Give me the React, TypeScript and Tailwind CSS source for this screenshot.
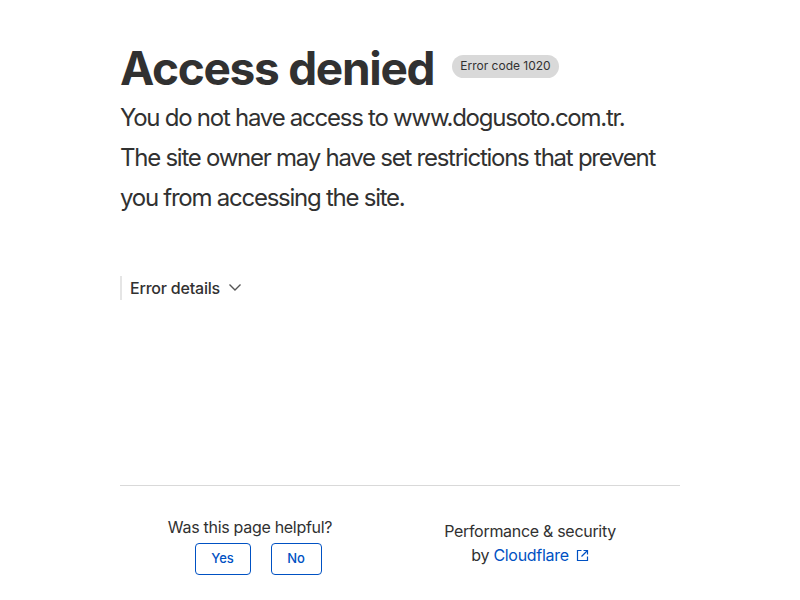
import React from "react";

export default function App() {
  return (
    <div
      className="w-[800px] h-[600px] bg-white text-[#313131] overflow-hidden"
      style={{ fontFamily: 'Inter, "Noto Sans", sans-serif' }}
    >
      <div className="w-[560px] mx-auto pt-[38px]">
        <div className="flex items-center gap-[18px]">
          <h1 className="text-[46px] font-bold leading-[60px] tracking-[-1.3px]">Access denied</h1>
          <span className="mt-[-4px] rounded-full bg-[#d9d9d9] px-[8px] h-[23px] flex items-center text-[12px] leading-none">
            Error code 1020
          </span>
        </div>
        <div className="text-[24px] leading-[40px] tracking-[-1.25px]">
          <p>You do not have access to www.dogusoto.com.tr.</p>
          <p>The site owner may have set restrictions that prevent you from accessing the site.</p>
        </div>
        <div className="mt-[58px] border-l-2 border-[#e5e5e5] pl-[8px] h-[24px] flex items-center gap-[8px]">
          <span className="text-[16px] font-medium tracking-[-0.2px]">Error details</span>
          <svg width="14" height="14" viewBox="0 0 14 14" fill="none" stroke="#555" strokeWidth="1.4" className="mt-[-2px]">
            <path d="M1.5 4.5 L7 10 L12.5 4.5" />
          </svg>
        </div>
        <div className="mt-[185px] border-t border-[#d9d9d9]" />
        <div className="flex gap-[20px]">
          <div className="w-[260px] flex flex-col items-center pt-[29px]">
            <div className="text-[16px] leading-[24px] tracking-[-0.3px]">Was this page helpful?</div>
            <div className="flex gap-[20px] mt-[4px] ml-[16px]">
              <button className="w-[56px] h-[32px] border border-[#0051c3] rounded-[4px] text-[13px] text-[#0051c3] font-medium">
                Yes
              </button>
              <button className="w-[51px] h-[32px] border border-[#0051c3] rounded-[4px] text-[13px] text-[#0051c3] font-medium">
                No
              </button>
            </div>
          </div>
          <div className="w-[260px] flex flex-col items-center pt-[33px] text-[16px] leading-[24px] tracking-[-0.3px]">
            <div>Performance &amp; security</div>
            <div className="flex items-center">
              by&nbsp;<span className="text-[#0051c3]">Cloudflare</span>
              <svg width="13" height="13" viewBox="0 0 13 13" fill="none" stroke="#0051c3" strokeWidth="1.2" className="ml-[7px]">
                <path d="M5.5 1.5 H1.5 V11.5 H11.5 V7.5" />
                <path d="M7.5 1.5 H11.5 V5.5" />
                <path d="M11.5 1.5 L5.5 7.5" />
              </svg>
            </div>
          </div>
        </div>
      </div>
    </div>
  );
}
